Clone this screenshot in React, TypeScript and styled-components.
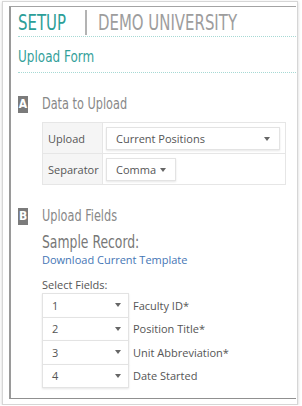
import styled, { createGlobalStyle } from "styled-components"

const narrow = `"DejaVu Sans Condensed", "DejaVu Sans", sans-serif`

const GlobalStyle = createGlobalStyle`
  html, body {
    margin: 0;
    padding: 0;
    background: #fff;
  }
  body {
    font-family: "Open Sans", "Liberation Sans", sans-serif;
    color: #555;
  }
`

const fields = [
  { order: "1", label: "Faculty ID*" },
  { order: "2", label: "Position Title*" },
  { order: "3", label: "Unit Abbreviation*" },
  { order: "4", label: "Date Started" },
]

export default function App() {
  return (
    <>
      <GlobalStyle />
      <Frame>
        <Window>
          <Header>
            <Brand>
              <Squeeze>SETUP</Squeeze>
            </Brand>
            <Divider />
            <Org>
              <Squeeze>DEMO UNIVERSITY</Squeeze>
            </Org>
          </Header>
          <PageTitle>
            <Squeeze>Upload Form</Squeeze>
          </PageTitle>

          <SectionHeading>
            <Badge>A</Badge>
            <Squeeze>Data to Upload</Squeeze>
          </SectionHeading>
          <SectionBody>
            <OptionsGrid>
              <LabelCell>Upload</LabelCell>
              <ValueCell>
                <SelectBox>
                  <span>Current Positions</span>
                  <Caret />
                </SelectBox>
              </ValueCell>
              <LabelCell>Separator</LabelCell>
              <ValueCell>
                <SelectBox $width={70}>
                  <span>Comma</span>
                  <Caret />
                </SelectBox>
              </ValueCell>
            </OptionsGrid>
          </SectionBody>

          <SectionHeading>
            <Badge>B</Badge>
            <Squeeze>Upload Fields</Squeeze>
          </SectionHeading>
          <SectionBody>
            <SampleTitle>
              <Squeeze>Sample Record:</Squeeze>
            </SampleTitle>
            <TemplateLink href="#">Download Current Template</TemplateLink>
            <FieldsLabel>Select Fields:</FieldsLabel>
            <FieldList>
              {fields.map((field) => (
                <FieldRow key={field.order}>
                  <FieldSelect>
                    <span>{field.order}</span>
                    <Caret />
                  </FieldSelect>
                  <FieldName>{field.label}</FieldName>
                </FieldRow>
              ))}
            </FieldList>
          </SectionBody>
        </Window>
      </Frame>
    </>
  )
}

const Frame = styled.div`
  box-sizing: border-box;
  width: 296px;
  height: 404px;
  margin: 1px 0 0 2px;
  padding: 4px 1px 5px 6px;
  border: 1px solid #d6d6d6;
  box-shadow: 0 1px 3px rgba(0, 0, 0, 0.18);
  background: #fff;
`

const Window = styled.div`
  box-sizing: border-box;
  height: 100%;
  display: flex;
  flex-direction: column;
  padding-left: 7px;
  border-left: 2px solid #9a9a9a;
  border-top: 1px solid #a3a3a3;
  border-bottom: 1px solid #909090;
`

/* the headings use a tall, narrow face: DejaVu Condensed squeezed a bit more */
const Squeeze = styled.span`
  display: inline-block;
  white-space: nowrap;
  transform: scaleX(0.81);
  transform-origin: left center;
`

const Header = styled.div`
  box-sizing: border-box;
  height: 30px;
  padding-top: 3px;
  display: flex;
  align-items: flex-start;
  border-bottom: 1px dotted #a6d9d4;
`

const Brand = styled.span`
  width: 50px;
  font-family: ${narrow};
  font-size: 20.5px;
  line-height: 26px;
  color: #2c9e98;
`

const Divider = styled.span`
  width: 2px;
  height: 25px;
  margin: 0 11px 0 17px;
  background: #b3b3b3;
`

const Org = styled(Brand)`
  width: auto;
  color: #9d9d9d;
`

const PageTitle = styled.div`
  padding-top: 4px;
  font-family: ${narrow};
  font-size: 16.5px;
  line-height: 31px;
  color: #33a09a;
  border-bottom: 1px dotted #a6d9d4;
`

const SectionHeading = styled.div`
  display: flex;
  align-items: center;
  gap: 14px;
  height: 17px;
  margin-top: 23px;
  font-family: ${narrow};
  font-size: 15.5px;
  line-height: 17px;
  color: #888;
`

const Badge = styled.span`
  width: 10px;
  height: 17px;
  display: flex;
  align-items: center;
  justify-content: center;
  background: #7b7b7b;
  color: #fff;
  font-weight: bold;
  font-size: 12px;
`

const SectionBody = styled.div`
  padding-left: 24px;
`

const OptionsGrid = styled.div`
  box-sizing: border-box;
  width: 244px;
  margin-top: 9px;
  display: grid;
  grid-template-columns: 60px 1fr;
  border-top: 1px solid #e6e6e6;
  border-left: 1px solid #e6e6e6;
`

const LabelCell = styled.div`
  display: flex;
  align-items: center;
  padding-left: 5px;
  background: #f5f5f5;
  border-right: 1px solid #e6e6e6;
  border-bottom: 1px solid #e6e6e6;
  font-size: 11px;
  color: #555;
`

const ValueCell = styled.div`
  display: flex;
  padding: 4px 5px 3px 3px;
  border-right: 1px solid #e6e6e6;
  border-bottom: 1px solid #e6e6e6;
`

const SelectBox = styled.div<{ $width?: number }>`
  box-sizing: border-box;
  width: ${({ $width }) => ($width ? `${$width}px` : "100%")};
  height: 23px;
  display: flex;
  align-items: center;
  justify-content: space-between;
  padding: 0 9px 0 9px;
  background: #fff;
  border: 1px solid #e3e3e3;
  box-shadow: 0 1px 2px rgba(0, 0, 0, 0.1);
  font-size: 11px;
  color: #555;
`

const Caret = styled.span`
  width: 0;
  height: 0;
  border-left: 3.5px solid transparent;
  border-right: 3.5px solid transparent;
  border-top: 4px solid #666;
`

const SampleTitle = styled.div`
  margin-top: 7px;
  font-family: ${narrow};
  font-size: 17px;
  line-height: 20px;
  color: #777;
`

const TemplateLink = styled.a`
  display: block;
  font-size: 11px;
  line-height: 15px;
  color: #4576b5;
  text-decoration: none;
`

const FieldsLabel = styled.div`
  margin-top: 10px;
  font-size: 11px;
  line-height: 15px;
  color: #555;
`

const FieldList = styled.div`
  margin-top: 1px;
  display: flex;
  flex-direction: column;
`

const FieldRow = styled.div`
  display: flex;
  align-items: center;
  gap: 4px;
  & + & {
    margin-top: -1px;
  }
`

const FieldSelect = styled(SelectBox)`
  width: 87px;
  height: 24.5px;
  padding: 0 7px 0 9px;
`

const FieldName = styled.span`
  font-size: 11px;
  color: #555;
`
